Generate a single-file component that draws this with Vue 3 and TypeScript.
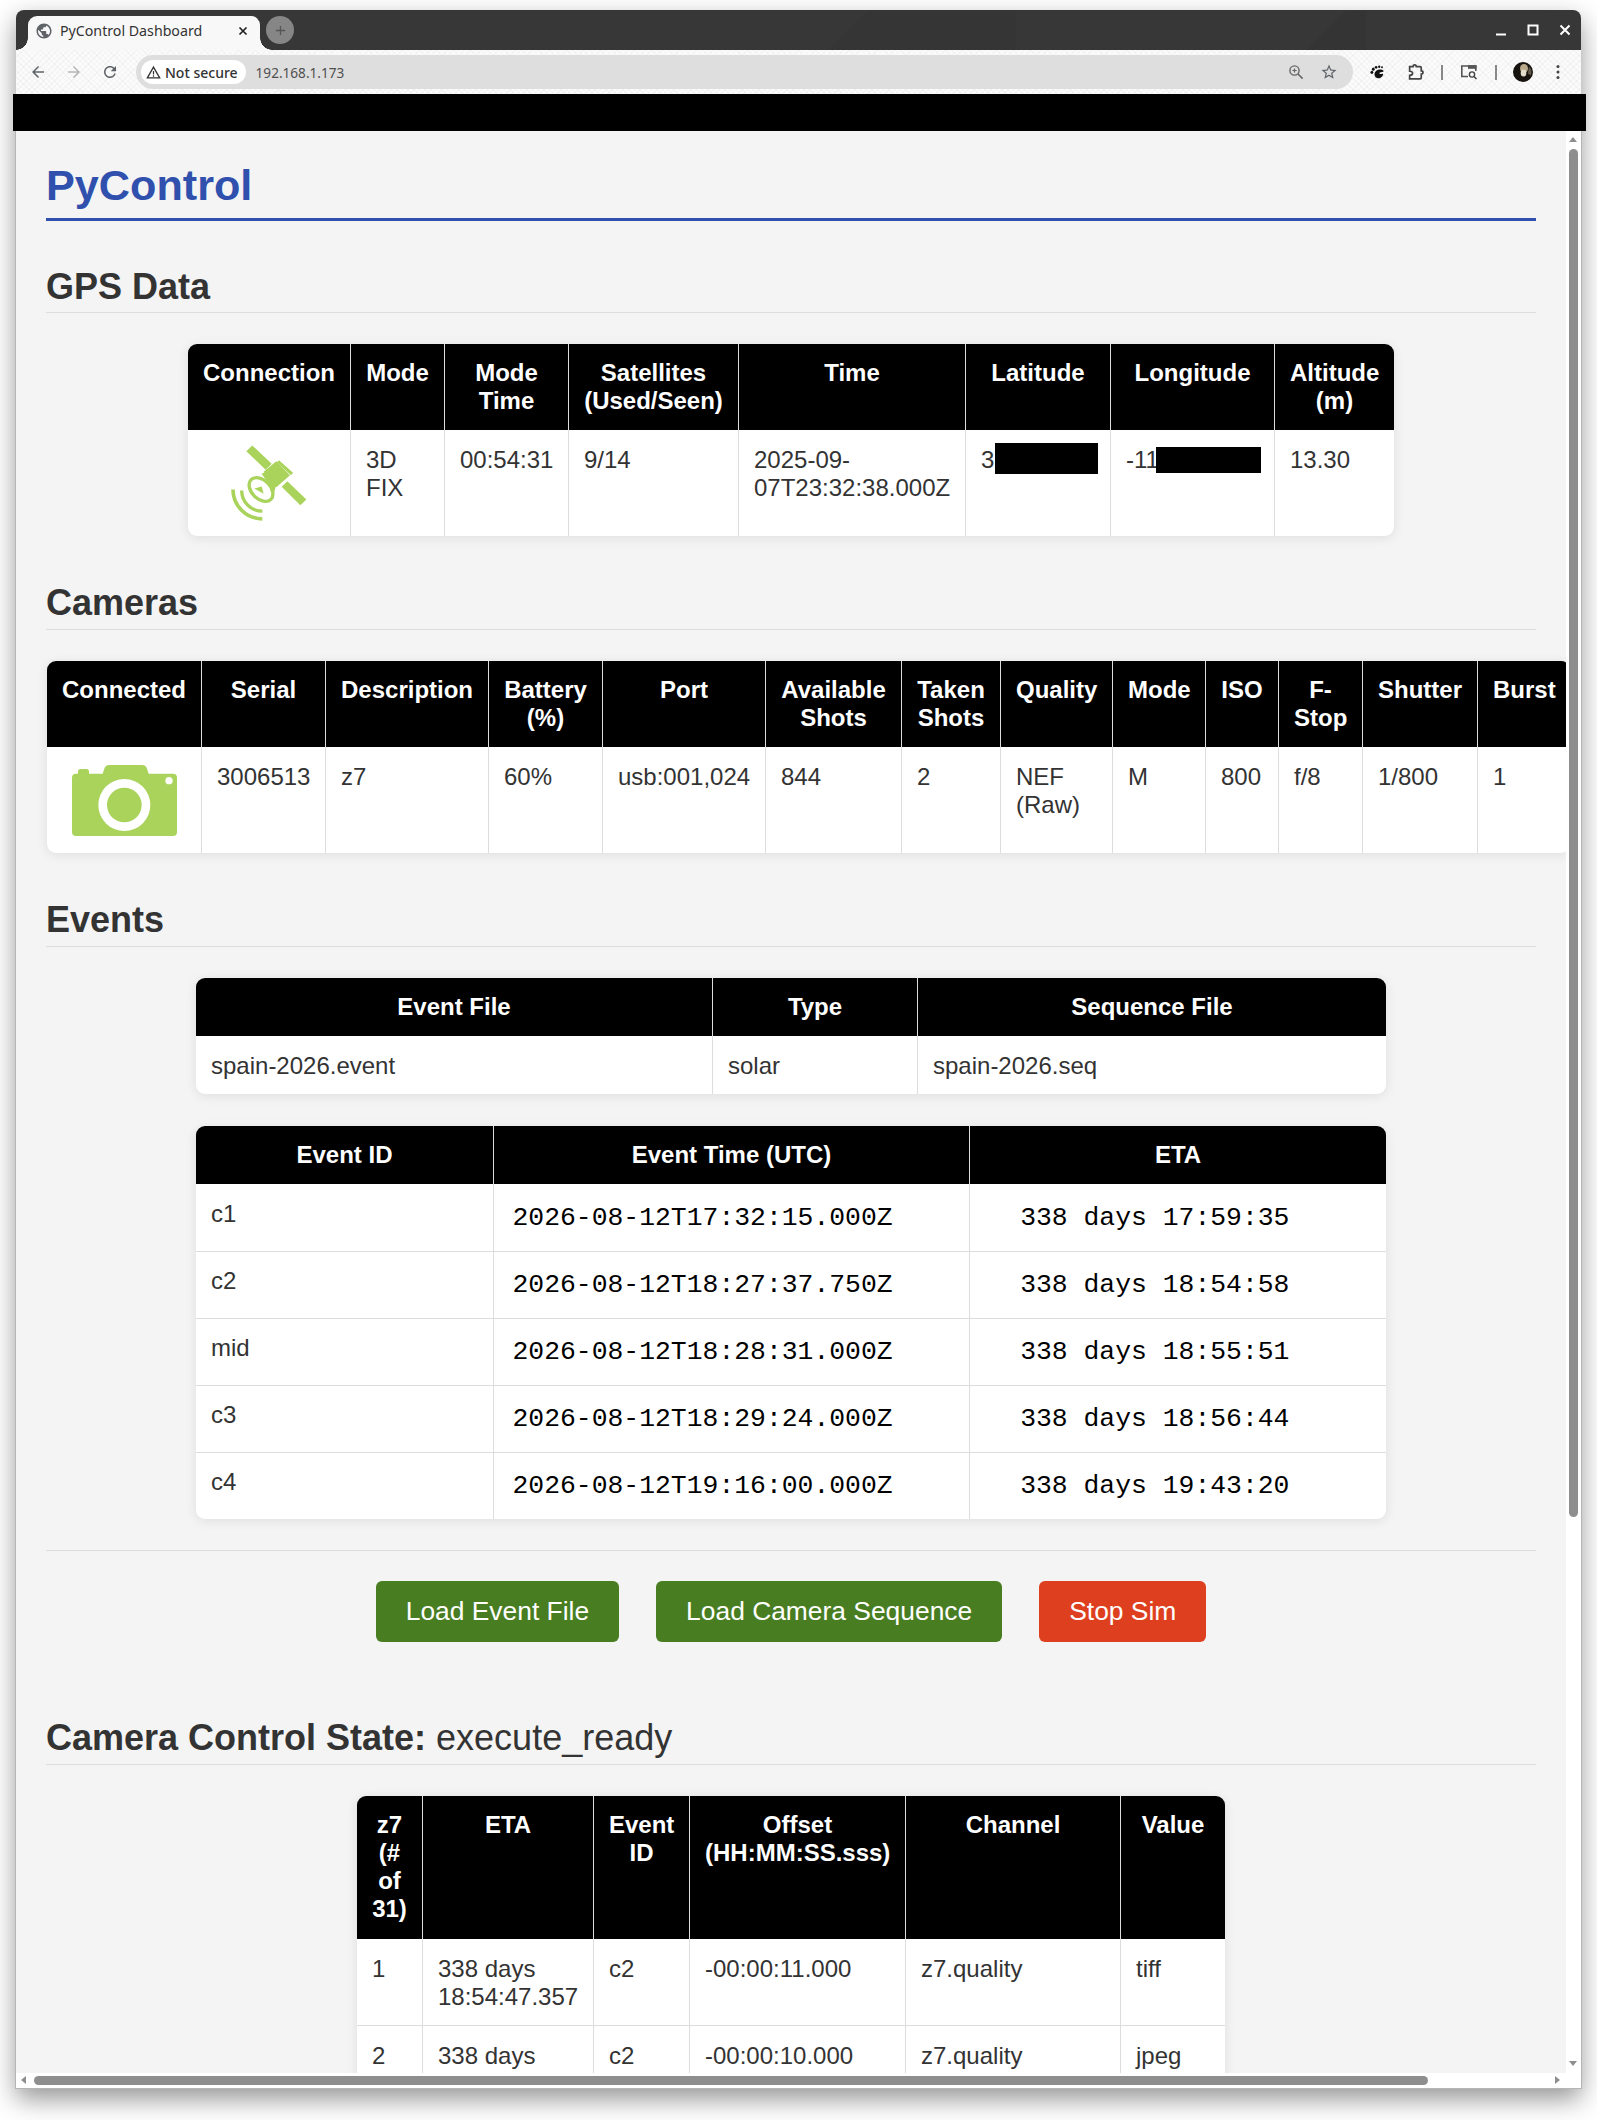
<script setup lang="ts">
import { computed } from 'vue'

const sum = (list: number[]): number => list.reduce((a, b) => a + b, 0)

const gpsCols = [162, 94, 124, 170, 227, 145, 164, 120]
const gpsHead = ['Connection', 'Mode', 'Mode Time', 'Satellites (Used/Seen)', 'Time', 'Latitude', 'Longitude', 'Altitude (m)']

const camCols = [154, 124, 163, 114, 163, 136, 99, 112, 93, 73, 84, 115, 93]
const camHead = ['Connected', 'Serial', 'Description', 'Battery (%)', 'Port', 'Available Shots', 'Taken Shots', 'Quality', 'Mode', 'ISO', 'F-Stop', 'Shutter', 'Burst']
const camRow = ['3006513', 'z7', '60%', 'usb:001,024', '844', '2', 'NEF (Raw)', 'M', '800', 'f/8', '1/800', '1']

const fileCols = [516, 205, 469]
const eventCols = [297, 476, 417]
const events = [
  { id: 'c1', time: '2026-08-12T17:32:15.000Z', eta: '  338 days 17:59:35' },
  { id: 'c2', time: '2026-08-12T18:27:37.750Z', eta: '  338 days 18:54:58' },
  { id: 'mid', time: '2026-08-12T18:28:31.000Z', eta: '  338 days 18:55:51' },
  { id: 'c3', time: '2026-08-12T18:29:24.000Z', eta: '  338 days 18:56:44' },
  { id: 'c4', time: '2026-08-12T19:16:00.000Z', eta: '  338 days 19:43:20' },
]

const seqCols = [65, 171, 96, 216, 215, 105]
const seqHead = ['z7 (# of 31)', 'ETA', 'Event ID', 'Offset (HH:MM:SS.sss)', 'Channel', 'Value']
const seqRows = [
  ['1', '338 days 18:54:47.357', 'c2', '-00:00:11.000', 'z7.quality', 'tiff'],
  ['2', '338 days 18:54:48.357', 'c2', '-00:00:10.000', 'z7.quality', 'jpeg'],
]

const widths = computed(() => ({
  gps: sum(gpsCols),
  cam: sum(camCols),
  file: sum(fileCols),
  event: sum(eventCols),
  seq: sum(seqCols),
}))
</script>

<template>
  <div class="stage">
    <div class="window">
      <header class="titlebar">
        <div class="tab">
          <svg class="favicon" viewBox="0 0 24 24"><path fill="#5f6368" d="M12 2C6.48 2 2 6.48 2 12s4.48 10 10 10 10-4.48 10-10S17.52 2 12 2zm-1 17.93c-3.95-.49-7-3.85-7-7.93 0-.62.08-1.21.21-1.79L9 15v1c0 1.1.9 2 2 2v1.93zm6.9-2.54c-.26-.81-1-1.39-1.9-1.39h-1v-3c0-.55-.45-1-1-1H8v-2h2c.55 0 1-.45 1-1V7h2c1.1 0 2-.9 2-2v-.41c2.93 1.19 5 4.06 5 7.41 0 2.08-.8 3.97-2.1 5.39z"/></svg>
          <span class="tab-title">PyControl Dashboard</span>
          <svg class="tab-close" viewBox="0 0 10 10"><path d="M1.500 1.500l7 7M8.500 1.500l-7 7" stroke="#222" stroke-width="1.7"/></svg>
        </div>
        <div class="newtab"><svg viewBox="0 0 12 12"><path d="M6 1v10M1 6h10" stroke="#555" stroke-width="1.4"/></svg></div>
        <div class="winctl">
          <svg viewBox="0 0 12 12"><path d="M1 10.500h10" stroke="#fff" stroke-width="2"/></svg>
          <svg viewBox="0 0 12 12"><rect x="1.500" y="1.500" width="9" height="9" fill="none" stroke="#fff" stroke-width="2"/></svg>
          <svg viewBox="0 0 12 12"><path d="M1.500 1.500l9 9M10.500 1.500l-9 9" stroke="#fff" stroke-width="2"/></svg>
        </div>
      </header>

      <div class="toolbar">
        <div class="navs">
          <svg viewBox="0 0 24 24"><path fill="#5f6368" d="M20 11H7.830l5.590-5.590L12 4l-8 8 8 8 1.410-1.410L7.830 13H20v-2z"/></svg>
          <svg viewBox="0 0 24 24"><path fill="#b4b6b8" d="M4 11h12.170l-5.590-5.590L12 4l8 8-8 8-1.410-1.410L16.170 13H4v-2z"/></svg>
          <svg viewBox="0 0 24 24"><path fill="#5f6368" d="M17.65 6.35C16.2 4.9 14.21 4 12 4c-4.42 0-7.99 3.58-7.99 8s3.57 8 7.99 8c3.73 0 6.84-2.55 7.73-6h-2.08c-.82 2.33-3.04 4-5.65 4-3.31 0-6-2.69-6-6s2.69-6 6-6c1.66 0 3.14.69 4.22 1.78L13 11h7V4l-2.35 2.35z"/></svg>
        </div>
        <div class="omnibox">
          <span class="chip">
            <svg viewBox="0 0 16 16"><path d="M8 2.200L14.600 13.800H1.400z" fill="none" stroke="#333" stroke-width="1.4"/><path d="M8 6.500v3.600M8 11v1.400" stroke="#333" stroke-width="1.3"/></svg>
            Not secure
          </span>
          <span class="url">192.168.1.173</span>
          <span class="grow"></span>
          <svg class="omni-icon" viewBox="0 0 16 16"><circle cx="6.500" cy="6.500" r="4.600" fill="none" stroke="#666" stroke-width="1.4"/><path d="M10 10l4.600 4.600" stroke="#666" stroke-width="1.6"/><path d="M6.500 4.400v4.200M4.400 6.500h4.200" stroke="#666" stroke-width="1.2"/></svg>
          <svg class="omni-star" viewBox="0 0 24 24"><path fill="#5f6368" d="M22 9.240l-7.190-.62L12 2 9.190 8.630 2 9.240l5.460 4.730L5.820 21 12 17.270 18.180 21l-1.630-7.030L22 9.240zM12 15.400l-3.760 2.270 1-4.280-3.320-2.880 4.380-.38L12 6.100l1.710 4.040 4.380.38-3.320 2.880 1 4.280L12 15.400z"/></svg>
        </div>
        <div class="actions">
          <svg class="ext-foot" viewBox="0 0 16 16">
            <path fill="#111" d="M4.800 10c0-3 2.500-5.300 5.800-5.300 2 0 4 .6 3.900 1.900-.1 1.100-2.900.6-4 1.500-.8.600-.5 1.500.5 1.500 1 0 2.100-.6 2.800-.2.800.5-.3 3.700-3.500 4.600C7.300 14.800 4.800 12.700 4.800 10z"/>
            <ellipse cx="2" cy="7.800" rx="1.500" ry="1.800" fill="#111"/>
            <ellipse cx="3.500" cy="4.400" rx="1.500" ry="1.700" fill="#111"/>
            <ellipse cx="6.500" cy="2.500" rx="1.400" ry="1.500" fill="#111"/>
            <ellipse cx="9.800" cy="1.900" rx="1.200" ry="1.300" fill="#111"/>
            <ellipse cx="12.800" cy="2.300" rx="1" ry="1.100" fill="#111"/>
          </svg>
          <svg class="ext" viewBox="0 0 18 18"><path d="M2.500 3.500h3.300c0-2.200 3-2.200 3 0h3.700a1 1 0 011 1v3c2.200 0 2.200 3 0 3v3.500a1 1 0 01-1 1H2.500v-3.300c2.200 0 2.800-.9 2.800-1.900s-.6-2-2.800-2z" fill="none" stroke="#444" stroke-width="1.600"/></svg>
          <i class="sep"></i>
          <svg class="ext-search" viewBox="0 0 18 18"><path d="M8 13.500H1.800V3h14v5" fill="none" stroke="#555" stroke-width="1.600"/><rect x="8" y="2.200" width="8.500" height="3.600" fill="#555"/><circle cx="12" cy="11.500" r="2.600" fill="none" stroke="#444" stroke-width="1.400"/><path d="M14 13.500l2.500 2.500" stroke="#444" stroke-width="1.500"/></svg>
          <i class="sep"></i>
          <svg class="avatar" viewBox="0 0 20 20">
            <circle cx="10" cy="10" r="10" fill="#17130f"/>
            <ellipse cx="11" cy="6.500" rx="4" ry="4.500" fill="#b9a98a"/>
            <ellipse cx="10.500" cy="11" rx="2.800" ry="3.600" fill="#e3dccb"/>
            <path d="M16 4.500a8.500 8.500 0 011.800 9l-3-2z" fill="#62584a"/>
          </svg>
          <svg class="dots" viewBox="0 0 4 16"><circle cx="2" cy="2.500" r="1.500" fill="#444"/><circle cx="2" cy="8" r="1.500" fill="#444"/><circle cx="2" cy="13.500" r="1.500" fill="#444"/></svg>
        </div>
      </div>

      <div class="blackbar"></div>

      <div class="viewport">
        <main class="page">
          <h1>PyControl</h1>

          <h2>GPS Data</h2>
          <div class="tbl">
            <table :style="{ width: widths.gps + 'px' }">
              <colgroup><col v-for="(w, i) in gpsCols" :key="i" :style="{ width: w + 'px' }" /></colgroup>
              <thead><tr><th v-for="h in gpsHead" :key="h">{{ h }}</th></tr></thead>
              <tbody>
                <tr>
                  <td class="centre">
                    <svg class="sat" viewBox="36 33 228 225">
                      <g fill="#a9d35a">
                        <path d="M82 50L100 33L158 88L140 106Z"/>
                        <path d="M205 140L262 195L244 212L188 157Z"/>
                        <path d="M134 112L172 80L213 122L172 158Z"/>
                        <path d="M180 77L222 115L216 122L174 83Z"/>
                        <path d="M128 118L140 112L172 150L166 172L150 150Z"/>
                      </g>
                      <g fill="none" stroke="#a9d35a">
                        <ellipse cx="126" cy="165" rx="42" ry="28" transform="rotate(45 126 165)" stroke-width="10"/>
                        <path d="M42 165a88 88 0 0088 88" stroke-width="11"/>
                        <path d="M68 168a62 62 0 0062 62" stroke-width="10"/>
                      </g>
                      <path d="M106 162l22-6 6 22z" fill="#a9d35a"/>
                    </svg>
                  </td>
                  <td>3D FIX</td>
                  <td>00:54:31</td>
                  <td>9/14</td>
                  <td>2025-09-07T23:32:38.000Z</td>
                  <td class="masked">3<i class="mask mask-lat"></i></td>
                  <td class="masked">-11<i class="mask mask-lon"></i></td>
                  <td>13.30</td>
                </tr>
              </tbody>
            </table>
          </div>

          <h2>Cameras</h2>
          <div class="tbl tbl-cam">
            <table :style="{ width: widths.cam + 'px' }">
              <colgroup><col v-for="(w, i) in camCols" :key="i" :style="{ width: w + 'px' }" /></colgroup>
              <thead><tr><th v-for="h in camHead" :key="h">{{ h }}</th></tr></thead>
              <tbody>
                <tr>
                  <td class="centre">
                    <svg class="cam" viewBox="126 336 315 228">
                      <path fill="#a9d35a" fill-rule="evenodd" d="M138 371h6v-6q0-8 8-8h17q8 0 8 8v6h41l6-18q3-8 12-8h102q9 0 12 8l6 18h73q12 0 12 12v163q0 12-12 12H138q-12 0-12-12V383q0-12 12-12zM283 387a78 78 0 100 156 78 78 0 000-156zM283 413a52 52 0 110 104 52 52 0 010-104zM417 381a11 11 0 100 22 11 11 0 000-22z"/>
                    </svg>
                  </td>
                  <td v-for="(c, i) in camRow" :key="i">{{ c }}</td>
                </tr>
              </tbody>
            </table>
          </div>

          <h2>Events</h2>
          <div class="tbl">
            <table :style="{ width: widths.file + 'px' }">
              <colgroup><col v-for="(w, i) in fileCols" :key="i" :style="{ width: w + 'px' }" /></colgroup>
              <thead><tr><th>Event File</th><th>Type</th><th>Sequence File</th></tr></thead>
              <tbody><tr><td>spain-2026.event</td><td>solar</td><td>spain-2026.seq</td></tr></tbody>
            </table>
          </div>
          <div class="tbl tbl-next">
            <table :style="{ width: widths.event + 'px' }">
              <colgroup><col v-for="(w, i) in eventCols" :key="i" :style="{ width: w + 'px' }" /></colgroup>
              <thead><tr><th>Event ID</th><th>Event Time (UTC)</th><th>ETA</th></tr></thead>
              <tbody>
                <tr v-for="e in events" :key="e.id">
                  <td>{{ e.id }}</td>
                  <td class="mono">{{ e.time }}</td>
                  <td class="mono">{{ e.eta }}</td>
                </tr>
              </tbody>
            </table>
          </div>

          <hr />

          <div class="buttons">
            <button class="go">Load Event File</button>
            <button class="go">Load Camera Sequence</button>
            <button class="stop">Stop Sim</button>
          </div>

          <h2 class="state"><b>Camera Control State:</b> execute_ready</h2>
          <div class="tbl tbl-seq">
            <table :style="{ width: widths.seq + 'px' }">
              <colgroup><col v-for="(w, i) in seqCols" :key="i" :style="{ width: w + 'px' }" /></colgroup>
              <thead><tr><th v-for="h in seqHead" :key="h">{{ h }}</th></tr></thead>
              <tbody>
                <tr v-for="row in seqRows" :key="row[0]">
                  <td v-for="(c, i) in row" :key="i">{{ c }}</td>
                </tr>
              </tbody>
            </table>
          </div>
        </main>

        <aside class="vbar">
          <i class="arrow-up"></i>
          <i class="vthumb"></i>
          <i class="arrow-down"></i>
        </aside>
      </div>

      <div class="hbar">
        <i class="arrow-left"></i>
        <i class="hthumb"></i>
        <i class="arrow-right"></i>
      </div>
    </div>
  </div>
</template>

<style>
html, body { margin: 0; background: #fff; }
</style>

<style scoped>
.stage {
  box-sizing: border-box;
  height: 2120px;
  width: 1597px;
  padding: 10px 16px 0;
  overflow: hidden;
  background: #fff;
  font-family: "Liberation Sans", Arial, sans-serif;
}
.window {
  width: 1565px;
  border-radius: 8px 8px 0 0;
  box-shadow: 0 10px 26px rgba(0, 0, 0, .42);
}

/* browser chrome */
.titlebar {
  position: relative;
  height: 40px;
  display: flex;
  align-items: flex-start;
  background:
    linear-gradient(135deg, transparent 60%, rgba(0, 0, 0, .05) 60%) 1240px 0 / 110px 40px no-repeat,
    linear-gradient(135deg, transparent 45%, rgba(0, 0, 0, .04) 45%) 700px 0 / 300px 40px no-repeat,
    #373737;
  border-radius: 8px 8px 0 0;
}
.tab {
  position: relative;
  box-sizing: border-box;
  margin: 6px 0 0 12px;
  width: 232px;
  height: 34px;
  display: flex;
  align-items: center;
  padding: 0 0 5px 7px;
  border-radius: 9px 9px 0 0;
  background: #f8f8f8;
  color: #333;
}
.tab::before, .tab::after {
  content: "";
  position: absolute;
  bottom: 0;
  width: 12px;
  height: 12px;
}
.tab::before { left: -12px; background: radial-gradient(circle at 0 0, transparent 11.5px, #f8f8f8 12px); }
.tab::after { right: -12px; background: radial-gradient(circle at 100% 0, transparent 11.5px, #f8f8f8 12px); }
.favicon { width: 18px; height: 18px; }
.tab-title {
  margin-left: 7px;
  font: 14.2px "Noto Sans", sans-serif;
  white-space: nowrap;
}
.tab-close { width: 10px; height: 10px; margin-left: auto; margin-right: 12px; }
.newtab {
  margin: 6px 0 0 6px;
  width: 28px;
  height: 28px;
  border-radius: 50%;
  background: #868686;
  display: flex;
  align-items: center;
  justify-content: center;
}
.newtab svg { width: 11px; height: 11px; }
.winctl {
  margin-left: auto;
  margin-right: 10px;
  display: flex;
  gap: 20px;
  padding-top: 14px;
}
.winctl svg { width: 12px; height: 12px; }

.toolbar {
  height: 44px;
  display: flex;
  align-items: center;
  background:
    repeating-linear-gradient(45deg, rgba(0, 0, 0, .028) 0 1px, transparent 1px 4px),
    repeating-linear-gradient(-45deg, rgba(0, 0, 0, .028) 0 1px, transparent 1px 4px),
    #fbfbfb;
}
.navs {
  display: flex;
  gap: 18px;
  width: 120px;
  padding-left: 13px;
  box-sizing: border-box;
}
.navs svg { width: 18px; height: 18px; flex: none; }
.omnibox {
  width: 1217px;
  height: 34px;
  box-sizing: border-box;
  border-radius: 17px;
  background: #dedede;
  display: flex;
  align-items: center;
  padding: 0 15px 0 5px;
}
.chip {
  display: flex;
  align-items: center;
  gap: 4px;
  height: 24px;
  padding: 0 8px 0 5px;
  background: #fff;
  border-radius: 12px;
  color: #333;
  font: 500 14px "Noto Sans", sans-serif;
  white-space: nowrap;
}
.chip svg { width: 15px; height: 15px; }
.url {
  margin-left: 10px;
  font: 13.6px "Noto Sans", sans-serif;
  color: #505050;
}
.grow { flex: 1; }
.omni-icon { width: 16px; height: 16px; }
.omni-star { width: 18px; height: 18px; margin-left: 16px; }
.actions {
  display: flex;
  align-items: center;
  padding-left: 17px;
}
.ext-foot { width: 15px; height: 15px; flex: none; margin-right: 22px; }
.ext { width: 19px; height: 19px; flex: none; margin-right: 15px; }
.sep { width: 2px; height: 15px; background: #888; flex: none; }
.ext-search { width: 18px; height: 18px; flex: none; margin: 0 17px; }
.avatar { width: 20px; height: 20px; flex: none; margin-left: 16px; }
.dots { width: 4px; height: 16px; flex: none; margin-left: 23px; }

.blackbar {
  height: 37px;
  margin: 0 -5px 0 -3px;
  background: #000;
  position: relative;
}

.viewport {
  display: flex;
  height: 1942px;
  border-left: 1px solid #b5b5b5;
  margin-left: -1px;
  border-right: 1px solid #b5b5b5;
  margin-right: -1px;
  background: #fff;
}
.page {
  box-sizing: border-box;
  width: 1550px;
  flex: none;
  overflow: hidden;
  padding: 30px 30px 0;
  background: #f4f4f4;
  color: #333;
  font-size: 24px;
  line-height: 28px;
}
h1 {
  margin: 0;
  padding-bottom: 8px;
  border-bottom: 3px solid #3050ae;
  color: #3050ae;
  font-size: 43.2px;
  line-height: 49px;
  font-weight: 700;
}
h2 {
  margin: 46px 0 0;
  padding-bottom: 6px;
  border-bottom: 1px solid #ddd;
  color: #333;
  font-size: 36px;
  line-height: 41px;
  font-weight: 700;
}
h1 + h2 { margin-top: 45px; padding-bottom: 5px; }
h2.state { margin-top: 75px; font-weight: 400; }
.state b { font-weight: 700; }

.tbl {
  width: fit-content;
  margin: 31px auto 0;
  border-radius: 9px;
  overflow: hidden;
  background: #fff;
  box-shadow: 0 2px 12px rgba(0, 0, 0, .09);
}
.tbl-cam { margin-left: 1px; }
.tbl-next { margin-top: 32px; }
table {
  table-layout: fixed;
  border-collapse: separate;
  border-spacing: 0;
}
th, td {
  box-sizing: border-box;
  vertical-align: top;
  border-left: 1px solid #ddd;
}
th:first-child, td:first-child { border-left: 0; }
th {
  padding: 15px;
  background: #000;
  color: #fff;
  font-weight: 700;
  text-align: center;
}
.tbl-seq th { padding-bottom: 16px; }
td {
  padding: 16px 15px 14px;
  color: #333;
  text-align: left;
  border-bottom: 1px solid #ddd;
}
tbody tr:last-child td { border-bottom: 0; }
.tbl-next td { border-bottom: 0; padding-bottom: 15px; }
.tbl-next tr + tr td { border-top: 1px solid #ddd; padding-top: 15px; }
td.centre { padding: 15px 0; }
.sat, .cam { display: block; margin: 0 auto; height: 76px; }
.sat { width: 76px; }
.cam { width: 105px; }
.masked { position: relative; }
.mask { position: absolute; background: #000; }
.mask-lat { left: 29px; top: 13px; width: 103px; height: 31px; }
.mask-lon { left: 45px; top: 17px; width: 105px; height: 26px; }
td.mono {
  font-family: "Liberation Mono", "Courier New", monospace;
  font-size: 26.4px;
  line-height: 36px;
  white-space: pre;
  color: #000;
  padding-left: 18.5px;
}

hr {
  margin: 31px 0 0;
  border: 0;
  border-top: 1px solid #ddd;
}
.buttons {
  display: flex;
  justify-content: center;
  gap: 37px;
  margin-top: 30px;
}
button {
  height: 61px;
  padding: 0 30px;
  border: 0;
  border-radius: 6px;
  color: #fff;
  font: 26.4px "Liberation Sans", Arial, sans-serif;
}
.go { background: #487d21; }
.stop { background: #de3f1f; }

/* scrollbars */
.vbar {
  position: relative;
  flex: 1;
  background: #fff;
}
.vbar i, .hbar i { position: absolute; display: block; }
.arrow-up {
  left: 3px; top: 6px;
  border-left: 4.5px solid transparent;
  border-right: 4.5px solid transparent;
  border-bottom: 5px solid #8e8e8e;
}
.arrow-down {
  left: 3px; bottom: 7px;
  border-left: 4.5px solid transparent;
  border-right: 4.5px solid transparent;
  border-top: 5px solid #8e8e8e;
}
.vthumb {
  left: 3px; top: 18px;
  width: 9px; height: 1368px;
  background: #8e8e8e;
  border-radius: 4.5px;
}
.hbar {
  position: relative;
  height: 15px;
  margin: 0 -1px;
  background: #fff;
  border: 1px solid #b5b5b5;
  border-top: 0;
}
.arrow-left {
  left: 5px; top: 3px;
  border-top: 4.5px solid transparent;
  border-bottom: 4.5px solid transparent;
  border-right: 5px solid #8e8e8e;
}
.arrow-right {
  left: 1539px; top: 3px;
  border-top: 4.5px solid transparent;
  border-bottom: 4.5px solid transparent;
  border-left: 5px solid #8e8e8e;
}
.hthumb {
  left: 18px; top: 3px;
  width: 1394px; height: 9px;
  background: #8e8e8e;
  border-radius: 4.5px;
}
</style>
